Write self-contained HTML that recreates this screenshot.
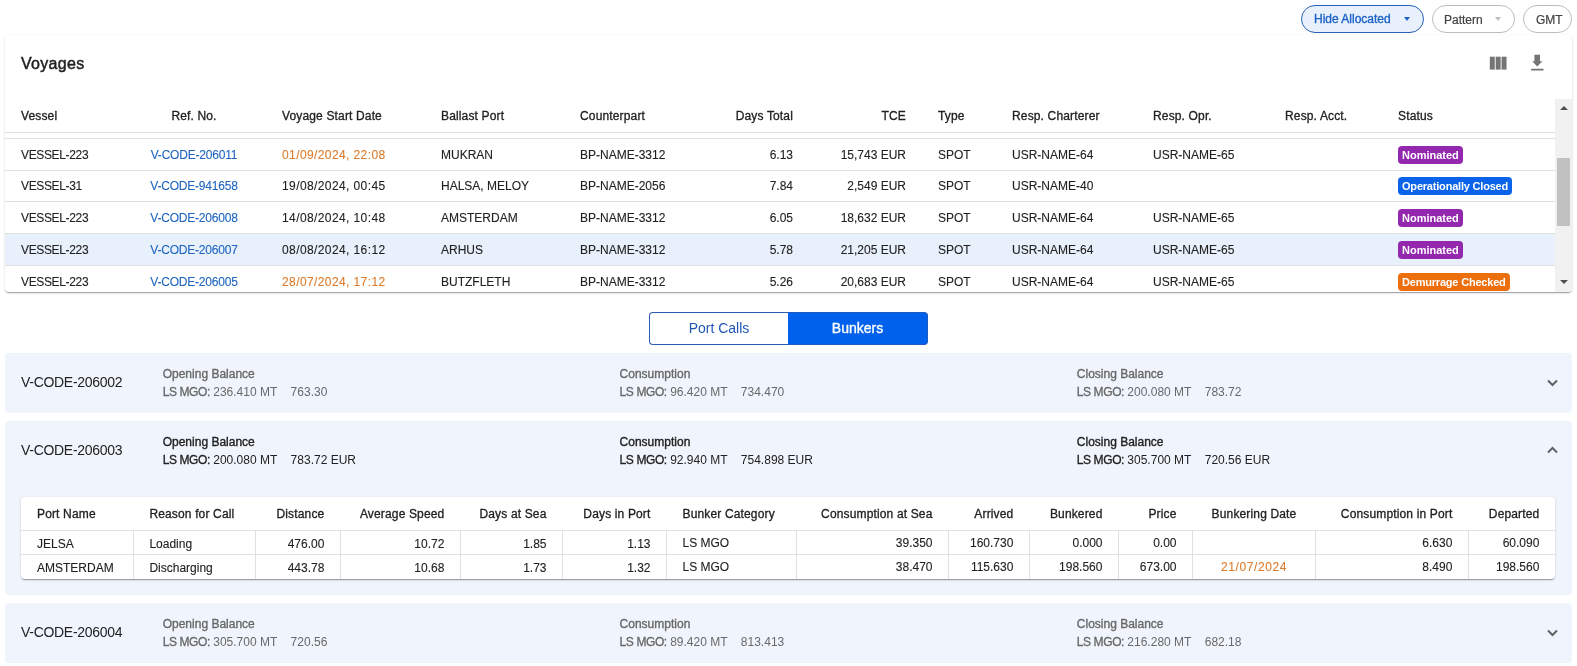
<!DOCTYPE html>
<html><head><meta charset="utf-8">
<style>
*{box-sizing:border-box;margin:0;padding:0}
html,body{width:1577px;height:666px;overflow:hidden;background:#fff;font-family:"Liberation Sans",sans-serif;color:#212121}
body{position:relative;will-change:transform}
.abs{position:absolute}
.med{font-weight:400;-webkit-text-stroke:0.35px currentColor}
.btn{position:absolute;top:5px;height:28px;border-radius:14px;font-size:12px;line-height:26px;white-space:nowrap}
.card{position:absolute;left:5px;top:35px;width:1567px;height:257px;background:#fff;border-radius:4px;box-shadow:0 2px 1px -1px rgba(0,0,0,.2),0 1px 1px 0 rgba(0,0,0,.14),0 1px 3px 0 rgba(0,0,0,.12);overflow:hidden}
.title{position:absolute;left:16px;top:19px;font-size:16px;font-weight:400;-webkit-text-stroke:0.45px #212121;letter-spacing:0.3px;line-height:20px;color:#212121}
.hdr{position:absolute;left:0;top:64px;width:1550px;height:34px;border-bottom:1px solid #e0e0e0}
.c{position:absolute;white-space:nowrap;font-size:12px}
.hdr .c{top:1px;line-height:33px;font-weight:400;-webkit-text-stroke:0.3px #212121;color:#212121;letter-spacing:0.15px}
.row{position:absolute;left:0;width:1550px;height:32px;border-top:1px solid #e0e0e0}
.row .c{top:1px;line-height:31px;color:#212121;-webkit-text-stroke:0.1px currentColor}
.row .c .badge{-webkit-text-stroke:0}
.row .link,.link{color:#2066c0}
.row .orange,.ir .orange,.orange{color:#dc7c2c}
.badge{display:inline-block;font-weight:700;font-size:11px;color:#fff;border-radius:4px;height:18px;line-height:18px;padding:0 4px;vertical-align:middle;letter-spacing:0}
.panel{position:absolute;left:5px;width:1567px;background:#f0f5fd;border-radius:4px}
.pcode{position:absolute;left:16px;font-size:14px;color:#212121;white-space:nowrap;letter-spacing:-0.3px}
.pcol{position:absolute;font-size:12px;line-height:18px;white-space:nowrap;color:#212121}
.pcol b{font-weight:400;-webkit-text-stroke:0.35px currentColor}
.pcol b.lsm{letter-spacing:-0.4px;-webkit-text-stroke:0.3px currentColor}
.gray{color:#686868}
.itable{position:absolute;left:16px;top:76px;width:1534px;height:82px;background:#fff;border-radius:4px;box-shadow:0 2px 1px -1px rgba(0,0,0,.2),0 1px 1px 0 rgba(0,0,0,.14),0 1px 3px 0 rgba(0,0,0,.12);overflow:hidden}
.ih .c{font-weight:400;-webkit-text-stroke:0.3px #212121;line-height:33px;top:1px;letter-spacing:0.15px}
.ir{position:absolute;left:0;width:1534px;height:24px;border-top:1px solid #e0e0e0}
.ir .c{line-height:23px;top:2px;-webkit-text-stroke:0.1px currentColor}
.vd{position:absolute;top:0;width:1px;height:24px;background:#e0e0e0}
</style></head><body>

<div class="btn med" style="left:1301px;width:123px;border:1px solid #2862b8;background:#e8f0fc;color:#1c62c8;padding-left:12px">Hide Allocated<span class="abs" style="left:102px;top:11px;width:0;height:0;border-left:3.5px solid transparent;border-right:3.5px solid transparent;border-top:4px solid #1c62c8;-webkit-text-stroke:0"></span></div>
<div class="btn" style="left:1432px;width:83px;border:1px solid #bdbdbd;background:#fff;color:#424242;padding-left:11px;line-height:28px"><span style="-webkit-text-stroke:0.2px #424242">Pattern</span><span class="abs" style="left:62px;top:11px;width:0;height:0;border-left:3.5px solid transparent;border-right:3.5px solid transparent;border-top:4px solid #bdbdbd"></span></div>
<div class="btn" style="left:1523px;width:49px;border:1px solid #bdbdbd;background:#fff;color:#424242;padding-left:12px;line-height:28px;-webkit-text-stroke:0.2px #424242">GMT</div>


<div class="card">
  <div class="title">Voyages</div>
  <svg class="abs" style="left:1480px;top:15px" width="70" height="30" viewBox="0 0 70 30"><g fill="#757575"><rect x="4.8" y="6.7" width="4.96" height="12.9"/><rect x="10.69" y="6.7" width="4.96" height="12.9"/><rect x="16.58" y="6.7" width="4.96" height="12.9"/><path d="M49.4 4.8h5.6v6.5h2.4l-5.1 5.1-5.1-5.1h2.2z"/><rect x="45.9" y="18.8" width="12.8" height="1.8" rx="0.9"/></g></svg>
  <div class="hdr">
    <div class="c" style="left:16px">Vessel</div>
    <div class="c" style="left:139px;width:100px;text-align:center">Ref. No.</div>
    <div class="c" style="left:277px">Voyage Start Date</div>
    <div class="c" style="left:436px">Ballast Port</div>
    <div class="c" style="left:575px">Counterpart</div>
    <div class="c" style="right:762px">Days Total</div>
    <div class="c" style="right:649px">TCE</div>
    <div class="c" style="left:933px">Type</div>
    <div class="c" style="left:1007px">Resp. Charterer</div>
    <div class="c" style="left:1148px">Resp. Opr.</div>
    <div class="c" style="left:1280px">Resp. Acct.</div>
    <div class="c" style="left:1393px">Status</div>
  </div>
<div class="row" style="top:103px;height:32px;"><div class="c" style="left:16px;letter-spacing:-0.35px;top:1px">VESSEL-223</div><div class="c link" style="left:139px;width:100px;text-align:center;letter-spacing:-0.2px;top:1px">V-CODE-206011</div><div class="c orange" style="left:277px;letter-spacing:0.4px;top:1px">01/09/2024, 22:08</div><div class="c" style="left:436px;top:1px">MUKRAN</div><div class="c" style="left:575px;top:1px">BP-NAME-3312</div><div class="c" style="right:762px;top:1px">6.13</div><div class="c" style="right:649px;top:1px">15,743 EUR</div><div class="c" style="left:933px;top:1px">SPOT</div><div class="c" style="left:1007px;top:1px">USR-NAME-64</div><div class="c" style="left:1148px;top:1px">USR-NAME-65</div><div class="c" style="left:1393px;top:0px"><span class="badge" style="background:#9327ad;">Nominated</span></div></div>
<div class="row" style="top:135px;height:31px;"><div class="c" style="left:16px;letter-spacing:-0.35px;top:0px">VESSEL-31</div><div class="c link" style="left:139px;width:100px;text-align:center;letter-spacing:-0.2px;top:0px">V-CODE-941658</div><div class="c" style="left:277px;letter-spacing:0.4px;top:0px">19/08/2024, 00:45</div><div class="c" style="left:436px;top:0px">HALSA, MELOY</div><div class="c" style="left:575px;top:0px">BP-NAME-2056</div><div class="c" style="right:762px;top:0px">7.84</div><div class="c" style="right:649px;top:0px">2,549 EUR</div><div class="c" style="left:933px;top:0px">SPOT</div><div class="c" style="left:1007px;top:0px">USR-NAME-40</div><div class="c" style="left:1393px;top:-1px"><span class="badge" style="background:#0a63e8;letter-spacing:-0.2px;">Operationally Closed</span></div></div>
<div class="row" style="top:166px;height:32px;"><div class="c" style="left:16px;letter-spacing:-0.35px;top:1px">VESSEL-223</div><div class="c link" style="left:139px;width:100px;text-align:center;letter-spacing:-0.2px;top:1px">V-CODE-206008</div><div class="c" style="left:277px;letter-spacing:0.4px;top:1px">14/08/2024, 10:48</div><div class="c" style="left:436px;top:1px">AMSTERDAM</div><div class="c" style="left:575px;top:1px">BP-NAME-3312</div><div class="c" style="right:762px;top:1px">6.05</div><div class="c" style="right:649px;top:1px">18,632 EUR</div><div class="c" style="left:933px;top:1px">SPOT</div><div class="c" style="left:1007px;top:1px">USR-NAME-64</div><div class="c" style="left:1148px;top:1px">USR-NAME-65</div><div class="c" style="left:1393px;top:0px"><span class="badge" style="background:#9327ad;">Nominated</span></div></div>
<div class="row" style="top:198px;height:32px;background:#e8f0fc;"><div class="c" style="left:16px;letter-spacing:-0.35px;top:1px">VESSEL-223</div><div class="c link" style="left:139px;width:100px;text-align:center;letter-spacing:-0.2px;top:1px">V-CODE-206007</div><div class="c" style="left:277px;letter-spacing:0.4px;top:1px">08/08/2024, 16:12</div><div class="c" style="left:436px;top:1px">ARHUS</div><div class="c" style="left:575px;top:1px">BP-NAME-3312</div><div class="c" style="right:762px;top:1px">5.78</div><div class="c" style="right:649px;top:1px">21,205 EUR</div><div class="c" style="left:933px;top:1px">SPOT</div><div class="c" style="left:1007px;top:1px">USR-NAME-64</div><div class="c" style="left:1148px;top:1px">USR-NAME-65</div><div class="c" style="left:1393px;top:0px"><span class="badge" style="background:#9327ad;">Nominated</span></div></div>
<div class="row" style="top:230px;height:32px;"><div class="c" style="left:16px;letter-spacing:-0.35px;top:1px">VESSEL-223</div><div class="c link" style="left:139px;width:100px;text-align:center;letter-spacing:-0.2px;top:1px">V-CODE-206005</div><div class="c orange" style="left:277px;letter-spacing:0.4px;top:1px">28/07/2024, 17:12</div><div class="c" style="left:436px;top:1px">BUTZFLETH</div><div class="c" style="left:575px;top:1px">BP-NAME-3312</div><div class="c" style="right:762px;top:1px">5.26</div><div class="c" style="right:649px;top:1px">20,683 EUR</div><div class="c" style="left:933px;top:1px">SPOT</div><div class="c" style="left:1007px;top:1px">USR-NAME-64</div><div class="c" style="left:1148px;top:1px">USR-NAME-65</div><div class="c" style="left:1393px;top:0px"><span class="badge" style="background:#ec6e0d;letter-spacing:-0.2px;">Demurrage Checked</span></div></div>
  <div class="abs" style="left:1550px;top:64px;width:17px;height:193px;background:#f1f1f1">
    <div class="abs" style="left:5px;top:7px;width:0;height:0;border-left:4px solid transparent;border-right:4px solid transparent;border-bottom:4px solid #505050"></div>
    <div class="abs" style="left:2px;top:59px;width:13px;height:68px;background:#c1c1c1"></div>
    <div class="abs" style="left:5px;top:181px;width:0;height:0;border-left:4px solid transparent;border-right:4px solid transparent;border-top:4px solid #505050"></div>
  </div>
</div>


<div class="abs" style="left:649px;top:312px;width:139px;height:33px;border:1px solid #2a5fb0;border-right:none;border-radius:4px 0 0 4px;background:#fff;color:#1f57b4;font-size:14px;line-height:30px;text-align:center">Port Calls</div>
<div class="abs med" style="left:788px;top:312px;width:140px;height:33px;border:1px solid #1d59c2;border-left:none;border-radius:0 4px 4px 0;background:#0061ed;color:#fff;font-size:14px;line-height:30px;text-align:center">Bunkers</div>

<div class="panel gray" style="top:353px;height:60px"><div class="pcode" style="top:19px;line-height:20px">V-CODE-206002</div><div class="pcol gray" style="left:157.7px;top:12px"><b>Opening Balance</b><br><b class="lsm">LS MGO:</b> 236.410 MT&nbsp;&nbsp;&nbsp;&nbsp;763.30</div><div class="pcol gray" style="left:614.6px;top:12px"><b>Consumption</b><br><b class="lsm">LS MGO:</b> 96.420 MT&nbsp;&nbsp;&nbsp;&nbsp;734.470</div><div class="pcol gray" style="left:1071.8px;top:12px"><b>Closing Balance</b><br><b class="lsm">LS MGO:</b> 200.080 MT&nbsp;&nbsp;&nbsp;&nbsp;783.72</div><svg class="abs" style="left:1542px;top:26px" width="11" height="8" viewBox="0 0 11 8"><path d="M1 1.5L5.5 6L10 1.5" fill="none" stroke="#616161" stroke-width="2"/></svg></div>
<div class="panel" style="top:421px;height:174px"><div class="pcode" style="top:19px;line-height:20px">V-CODE-206003</div><div class="pcol" style="left:157.7px;top:12px"><b>Opening Balance</b><br><b class="lsm">LS MGO:</b> 200.080 MT&nbsp;&nbsp;&nbsp;&nbsp;783.72 EUR</div><div class="pcol" style="left:614.6px;top:12px"><b>Consumption</b><br><b class="lsm">LS MGO:</b> 92.940 MT&nbsp;&nbsp;&nbsp;&nbsp;754.898 EUR</div><div class="pcol" style="left:1071.8px;top:12px"><b>Closing Balance</b><br><b class="lsm">LS MGO:</b> 305.700 MT&nbsp;&nbsp;&nbsp;&nbsp;720.56 EUR</div><svg class="abs" style="left:1542px;top:25px" width="11" height="8" viewBox="0 0 11 8"><path d="M1 6.5L5.5 2L10 6.5" fill="none" stroke="#616161" stroke-width="2"/></svg><div class="itable"><div class="ih abs" style="left:0;top:0;width:1534px;height:34px"><div class="c" style="left:0.0px;width:112.4px;padding:0 16px;text-align:left">Port Name</div><div class="c" style="left:112.4px;width:122.3px;padding:0 16px;text-align:left">Reason for Call</div><div class="c" style="left:234.7px;width:84.7px;padding:0 16px;text-align:right">Distance</div><div class="c" style="left:319.4px;width:120.0px;padding:0 16px;text-align:right">Average Speed</div><div class="c" style="left:439.4px;width:102.1px;padding:0 16px;text-align:right">Days at Sea</div><div class="c" style="left:541.5px;width:104.0px;padding:0 16px;text-align:right">Days in Port</div><div class="c" style="left:645.5px;width:130.0px;padding:0 16px;text-align:left">Bunker Category</div><div class="c" style="left:775.5px;width:152.0px;padding:0 16px;text-align:right">Consumption at Sea</div><div class="c" style="left:927.5px;width:80.9px;padding:0 16px;text-align:right">Arrived</div><div class="c" style="left:1008.4px;width:89.1px;padding:0 16px;text-align:right">Bunkered</div><div class="c" style="left:1097.5px;width:74.0px;padding:0 16px;text-align:right">Price</div><div class="c" style="left:1171.5px;width:123.0px;padding:0 16px;text-align:center">Bunkering Date</div><div class="c" style="left:1294.5px;width:152.9px;padding:0 16px;text-align:right">Consumption in Port</div><div class="c" style="left:1447.4px;width:87.0px;padding:0 16px;text-align:right">Departed</div></div><div class="ir" style="top:33px"><div class="c" style="left:0.0px;width:112.4px;padding:0 16px;text-align:left;top:2px">JELSA</div><div class="vd" style="left:111.9px"></div><div class="c" style="left:112.4px;width:122.3px;padding:0 16px;text-align:left;top:2px">Loading</div><div class="vd" style="left:234.2px"></div><div class="c" style="left:234.7px;width:84.7px;padding:0 16px;text-align:right;top:2px">476.00</div><div class="vd" style="left:318.9px"></div><div class="c" style="left:319.4px;width:120.0px;padding:0 16px;text-align:right;top:2px">10.72</div><div class="vd" style="left:438.9px"></div><div class="c" style="left:439.4px;width:102.1px;padding:0 16px;text-align:right;top:2px">1.85</div><div class="vd" style="left:541.0px"></div><div class="c" style="left:541.5px;width:104.0px;padding:0 16px;text-align:right;top:2px">1.13</div><div class="vd" style="left:645.0px"></div><div class="c" style="left:645.5px;width:130.0px;padding:0 16px;text-align:left;top:1px">LS MGO</div><div class="vd" style="left:775.0px"></div><div class="c" style="left:775.5px;width:152.0px;padding:0 16px;text-align:right;top:1px">39.350</div><div class="vd" style="left:927.0px"></div><div class="c" style="left:927.5px;width:80.9px;padding:0 16px;text-align:right;top:1px">160.730</div><div class="vd" style="left:1007.9px"></div><div class="c" style="left:1008.4px;width:89.1px;padding:0 16px;text-align:right;top:1px">0.000</div><div class="vd" style="left:1097.0px"></div><div class="c" style="left:1097.5px;width:74.0px;padding:0 16px;text-align:right;top:1px">0.00</div><div class="vd" style="left:1171.0px"></div><div class="vd" style="left:1294.0px"></div><div class="c" style="left:1294.5px;width:152.9px;padding:0 16px;text-align:right;top:1px">6.630</div><div class="vd" style="left:1446.9px"></div><div class="c" style="left:1447.4px;width:87.0px;padding:0 16px;text-align:right;top:1px">60.090</div></div><div class="ir" style="top:57px"><div class="c" style="left:0.0px;width:112.4px;padding:0 16px;text-align:left;top:2px">AMSTERDAM</div><div class="vd" style="left:111.9px"></div><div class="c" style="left:112.4px;width:122.3px;padding:0 16px;text-align:left;top:2px">Discharging</div><div class="vd" style="left:234.2px"></div><div class="c" style="left:234.7px;width:84.7px;padding:0 16px;text-align:right;top:2px">443.78</div><div class="vd" style="left:318.9px"></div><div class="c" style="left:319.4px;width:120.0px;padding:0 16px;text-align:right;top:2px">10.68</div><div class="vd" style="left:438.9px"></div><div class="c" style="left:439.4px;width:102.1px;padding:0 16px;text-align:right;top:2px">1.73</div><div class="vd" style="left:541.0px"></div><div class="c" style="left:541.5px;width:104.0px;padding:0 16px;text-align:right;top:2px">1.32</div><div class="vd" style="left:645.0px"></div><div class="c" style="left:645.5px;width:130.0px;padding:0 16px;text-align:left;top:1px">LS MGO</div><div class="vd" style="left:775.0px"></div><div class="c" style="left:775.5px;width:152.0px;padding:0 16px;text-align:right;top:1px">38.470</div><div class="vd" style="left:927.0px"></div><div class="c" style="left:927.5px;width:80.9px;padding:0 16px;text-align:right;top:1px">115.630</div><div class="vd" style="left:1007.9px"></div><div class="c" style="left:1008.4px;width:89.1px;padding:0 16px;text-align:right;top:1px">198.560</div><div class="vd" style="left:1097.0px"></div><div class="c" style="left:1097.5px;width:74.0px;padding:0 16px;text-align:right;top:1px">673.00</div><div class="vd" style="left:1171.0px"></div><div class="c orange" style="left:1171.5px;width:123.0px;padding:0 16px;text-align:center;letter-spacing:0.6px;top:1px">21/07/2024</div><div class="vd" style="left:1294.0px"></div><div class="c" style="left:1294.5px;width:152.9px;padding:0 16px;text-align:right;top:1px">8.490</div><div class="vd" style="left:1446.9px"></div><div class="c" style="left:1447.4px;width:87.0px;padding:0 16px;text-align:right;top:1px">198.560</div></div></div></div>
<div class="panel gray" style="top:603px;height:60px"><div class="pcode" style="top:19px;line-height:20px">V-CODE-206004</div><div class="pcol gray" style="left:157.7px;top:12px"><b>Opening Balance</b><br><b class="lsm">LS MGO:</b> 305.700 MT&nbsp;&nbsp;&nbsp;&nbsp;720.56</div><div class="pcol gray" style="left:614.6px;top:12px"><b>Consumption</b><br><b class="lsm">LS MGO:</b> 89.420 MT&nbsp;&nbsp;&nbsp;&nbsp;813.413</div><div class="pcol gray" style="left:1071.8px;top:12px"><b>Closing Balance</b><br><b class="lsm">LS MGO:</b> 216.280 MT&nbsp;&nbsp;&nbsp;&nbsp;682.18</div><svg class="abs" style="left:1542px;top:26px" width="11" height="8" viewBox="0 0 11 8"><path d="M1 1.5L5.5 6L10 1.5" fill="none" stroke="#616161" stroke-width="2"/></svg></div>
</body></html>
